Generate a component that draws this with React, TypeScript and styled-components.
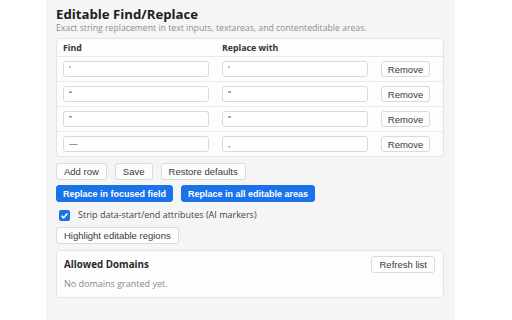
import React from 'react';
import styled, { createGlobalStyle } from 'styled-components';

const GlobalStyle = createGlobalStyle`
  html, body {
    margin: 0;
    padding: 0;
    background: #ffffff;
  }
  body {
    font-family: 'Open Sans', 'Liberation Sans', sans-serif;
    color: #1f1f1f;
  }
`;

const Page = styled.div`
  display: flex;
  width: 512px;
  height: 320px;
  overflow: hidden;
`;

const Panel = styled.main`
  margin-left: 46px;
  width: 409px;
  min-height: 320px;
  box-sizing: border-box;
  padding: 6px 11px 0 10px;
  background: #f5f5f5;
  display: flex;
  flex-direction: column;
`;

const Title = styled.h1`
  margin: 0;
  font-size: 13.2px;
  line-height: 16px;
  font-weight: 700;
  color: #202020;
`;

const Subtitle = styled.p`
  margin: 0;
  font-size: 8.7px;
  line-height: 12px;
  color: #8e8e8e;
`;

const Card = styled.section`
  background: #fdfdfd;
  border: 1px solid #e4e4e4;
  border-radius: 4px;
  box-sizing: border-box;
`;

const TableCard = styled(Card)`
  margin-top: 4px;
`;

const HeaderRow = styled.div`
  display: grid;
  grid-template-columns: 146px 146px 49px;
  column-gap: 13px;
  height: 17px;
  align-items: center;
  padding: 0 13px 0 6px;
  border-bottom: 1px solid #e8e8e8;
  font-size: 8.8px;
  font-weight: 700;
  color: #333;
`;

const Row = styled.div<{ $last?: boolean }>`
  display: grid;
  grid-template-columns: 146px 146px 49px;
  column-gap: 13px;
  height: 24px;
  align-items: center;
  padding: 0 13px 0 6px;
  border-bottom: ${(p) => (p.$last ? 'none' : '1px solid #ebebeb')};
`;

const Input = styled.input`
  box-sizing: border-box;
  width: 100%;
  height: 16px;
  border: 1px solid #d9d9d9;
  border-radius: 3px;
  background: #fff;
  padding: 0 5px;
  font-family: 'Liberation Sans', sans-serif;
  font-size: 8.5px;
  color: #444;
  outline: none;
`;

const Button = styled.button<{ $primary?: boolean }>`
  box-sizing: border-box;
  height: 17px;
  padding: 0 ${(p) => (p.$primary ? 6 : 7)}px;
  border-radius: 3px;
  border: 1px solid ${(p) => (p.$primary ? '#1a73e8' : '#dadada')};
  background: ${(p) => (p.$primary ? '#1a73e8' : '#fdfdfd')};
  color: ${(p) => (p.$primary ? '#ffffff' : '#3a3a3a')};
  font-family: 'Liberation Sans', Arial, sans-serif;
  font-size: ${(p) => (p.$primary ? 9 : 9.5)}px;
  font-weight: ${(p) => (p.$primary ? 700 : 400)};
  white-space: nowrap;
  cursor: pointer;
`;

const RemoveButton = styled(Button)`
  width: 49px;
  height: 16px;
  padding: 0;
`;

const ButtonRow = styled.div<{ $top: number }>`
  display: flex;
  gap: 8px;
  margin-top: ${(p) => p.$top}px;
`;

const CheckRow = styled.label`
  display: flex;
  align-items: center;
  gap: 8px;
  margin-top: 7px;
  padding-left: 3px;
  font-size: 9px;
  line-height: 12px;
  color: #444;
`;

const Check = styled.span`
  width: 11px;
  height: 11px;
  border-radius: 2px;
  background: #1a73e8;
  display: flex;
  align-items: center;
  justify-content: center;
`;

const DomainsCard = styled(Card)`
  margin-top: 6px;
  height: 48px;
  padding: 5px 8px 0 7px;
  display: flex;
  flex-direction: column;
`;

const DomainsHead = styled.div`
  display: flex;
  justify-content: space-between;
  align-items: center;
`;

const DomainsTitle = styled.h2`
  margin: 0;
  font-size: 9.8px;
  font-weight: 700;
  color: #2a2a2a;
`;

const Empty = styled.p`
  margin: 4px 0 0;
  font-size: 9px;
  color: #8a8a8a;
`;

const rows: [string, string][] = [
  ['\u2019', "'"],
  ['\u201C', '"'],
  ['\u201D', '"'],
  ['\u2014', ', '],
];

export default function App() {
  return (
    <Page>
      <GlobalStyle />
      <Panel>
        <Title>Editable Find/Replace</Title>
        <Subtitle>Exact string replacement in text inputs, textareas, and contenteditable areas.</Subtitle>
        <TableCard>
          <HeaderRow>
            <span>Find</span>
            <span>Replace with</span>
            <span />
          </HeaderRow>
          {rows.map(([find, repl], i) => (
            <Row key={i} $last={i === rows.length - 1}>
              <Input defaultValue={find} />
              <Input defaultValue={repl} />
              <RemoveButton>Remove</RemoveButton>
            </Row>
          ))}
        </TableCard>
        <ButtonRow $top={6}>
          <Button>Add row</Button>
          <Button>Save</Button>
          <Button>Restore defaults</Button>
        </ButtonRow>
        <ButtonRow $top={5}>
          <Button $primary>Replace in focused field</Button>
          <Button $primary>Replace in all editable areas</Button>
        </ButtonRow>
        <CheckRow>
          <Check>
            <svg width="9" height="9" viewBox="0 0 8 8">
              <path d="M1.4 4.2 L3.2 6 L6.6 2.2" stroke="#fff" strokeWidth="1.5" fill="none" />
            </svg>
          </Check>
          Strip data-start/end attributes (AI markers)
        </CheckRow>
        <ButtonRow $top={6}>
          <Button>Highlight editable regions</Button>
        </ButtonRow>
        <DomainsCard>
          <DomainsHead>
            <DomainsTitle>Allowed Domains</DomainsTitle>
            <Button>Refresh list</Button>
          </DomainsHead>
          <Empty>No domains granted yet.</Empty>
        </DomainsCard>
      </Panel>
    </Page>
  );
}
